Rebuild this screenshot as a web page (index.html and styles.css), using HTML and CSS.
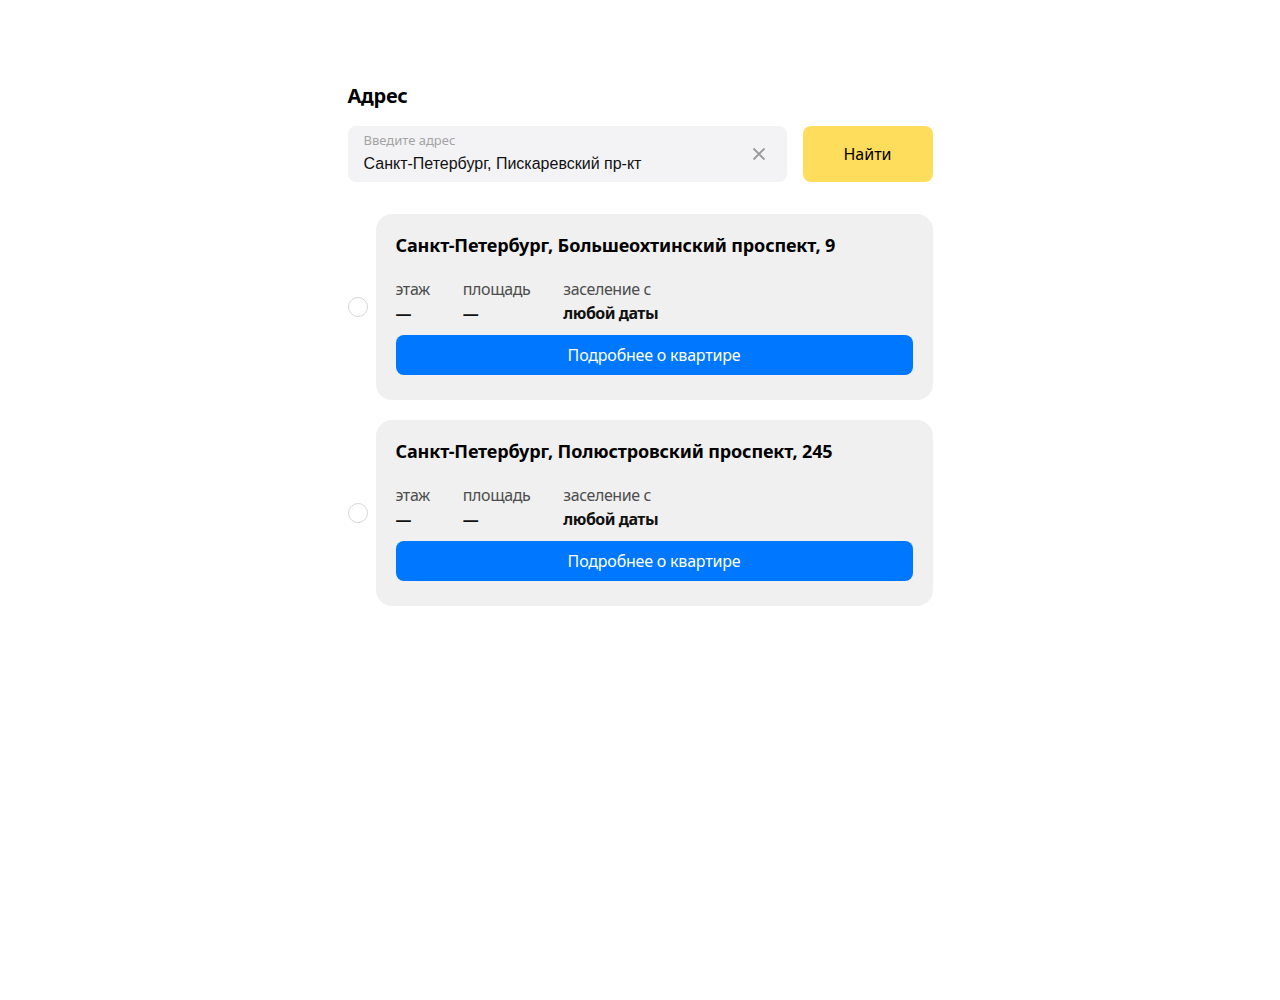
FILE: index.html
```html
<!DOCTYPE html>
<html lang="ru">
<head>
<meta charset="utf-8">
<link rel="stylesheet" href="styles.css">
</head>
<body>
<main class="page">
  <h1 class="heading">Адрес</h1>
  <div class="search">
    <label class="field">
      <span class="field-label">Введите адрес</span>
      <span class="field-value">Санкт-Петербург, Пискаревский пр-кт</span>
      <svg class="clear" width="14" height="14" viewBox="0 0 14 14"><path d="M1.5 1.5L12.5 12.5M12.5 1.5L1.5 12.5" stroke="#999" stroke-width="1.8" fill="none"/></svg>
    </label>
    <button class="find">Найти</button>
  </div>
  <ul class="list">
    <li class="item">
      <span class="radio"></span>
      <div class="card">
        <div class="card-title">Санкт-Петербург, Большеохтинский проспект, 9</div>
        <div class="props">
          <div class="prop"><div class="prop-label">этаж</div><div class="prop-value">—</div></div>
          <div class="prop"><div class="prop-label">площадь</div><div class="prop-value">—</div></div>
          <div class="prop"><div class="prop-label">заселение с</div><div class="prop-value">любой даты</div></div>
        </div>
        <button class="more">Подробнее о квартире</button>
      </div>
    </li>
    <li class="item">
      <span class="radio"></span>
      <div class="card">
        <div class="card-title">Санкт-Петербург, Полюстровский проспект, 245</div>
        <div class="props">
          <div class="prop"><div class="prop-label">этаж</div><div class="prop-value">—</div></div>
          <div class="prop"><div class="prop-label">площадь</div><div class="prop-value">—</div></div>
          <div class="prop"><div class="prop-label">заселение с</div><div class="prop-value">любой даты</div></div>
        </div>
        <button class="more">Подробнее о квартире</button>
      </div>
    </li>
  </ul>
</main>
</body>
</html>
```
FILE: styles.css
```css
* { box-sizing: border-box; }
body {
  margin: 0;
  background: #fff;
  font-family: "Noto Sans", "Open Sans", sans-serif;
  color: #000;
}
.page {
  width: 585px;
  margin: 0 auto;
  padding-top: 82px;
}
.heading {
  margin: 0 0 17px;
  font-size: 20px;
  line-height: 27px;
  font-weight: 700;
  letter-spacing: -0.3px;
}
.search {
  display: flex;
  gap: 16px;
  height: 56px;
}
.field {
  flex: 1;
  background: #f3f3f5;
  border-radius: 8px;
  padding: 6px 48px 0 16px;
  position: relative;
  display: flex;
  flex-direction: column;
}
.field-label {
  font-size: 13px;
  line-height: 16px;
  color: #a3a3a3;
  font-family: "Noto Sans", sans-serif;
}
.field-value {
  font-family: "Liberation Sans", Arial, sans-serif;
  font-size: 16px;
  line-height: 22px;
  color: #111;
  margin-top: 5px;
}
.clear {
  position: absolute;
  right: 21px;
  top: 21px;
}
.find {
  width: 130px;
  border: 0;
  border-radius: 8px;
  background: #ffdd5c;
  font-family: "Noto Sans", sans-serif;
  font-size: 16px;
  color: #000;
  padding: 0;
}
.list {
  list-style: none;
  margin: 32px 0 0;
  padding: 0;
  display: flex;
  flex-direction: column;
  gap: 20px;
}
.item {
  display: flex;
  align-items: center;
  gap: 8px;
}
.radio {
  width: 20px;
  height: 20px;
  border: 1px solid #d6d6d6;
  border-radius: 50%;
  background: #fff;
  flex: none;
}
.card {
  flex: 1;
  background: #f0f0f0;
  border-radius: 16px;
  padding: 19px 20px 25px;
}
.card-title {
  font-size: 18px;
  line-height: 24px;
  font-weight: 700;
  letter-spacing: -0.15px;
}
.props {
  display: flex;
  gap: 33px;
  margin-top: 20px;
}
.prop-label {
  font-size: 16px;
  line-height: 24px;
  color: #4d4d4d;
  letter-spacing: -0.4px;
}
.prop-value {
  font-size: 16px;
  line-height: 24px;
  font-weight: 700;
  color: #111;
  letter-spacing: -0.5px;
}
.more {
  display: block;
  width: 100%;
  height: 40px;
  margin-top: 10px;
  border: 0;
  border-radius: 8px;
  background: #0077ff;
  color: #fff;
  font-family: "Noto Sans", sans-serif;
  font-size: 16px;
  letter-spacing: -0.2px;
}
```
